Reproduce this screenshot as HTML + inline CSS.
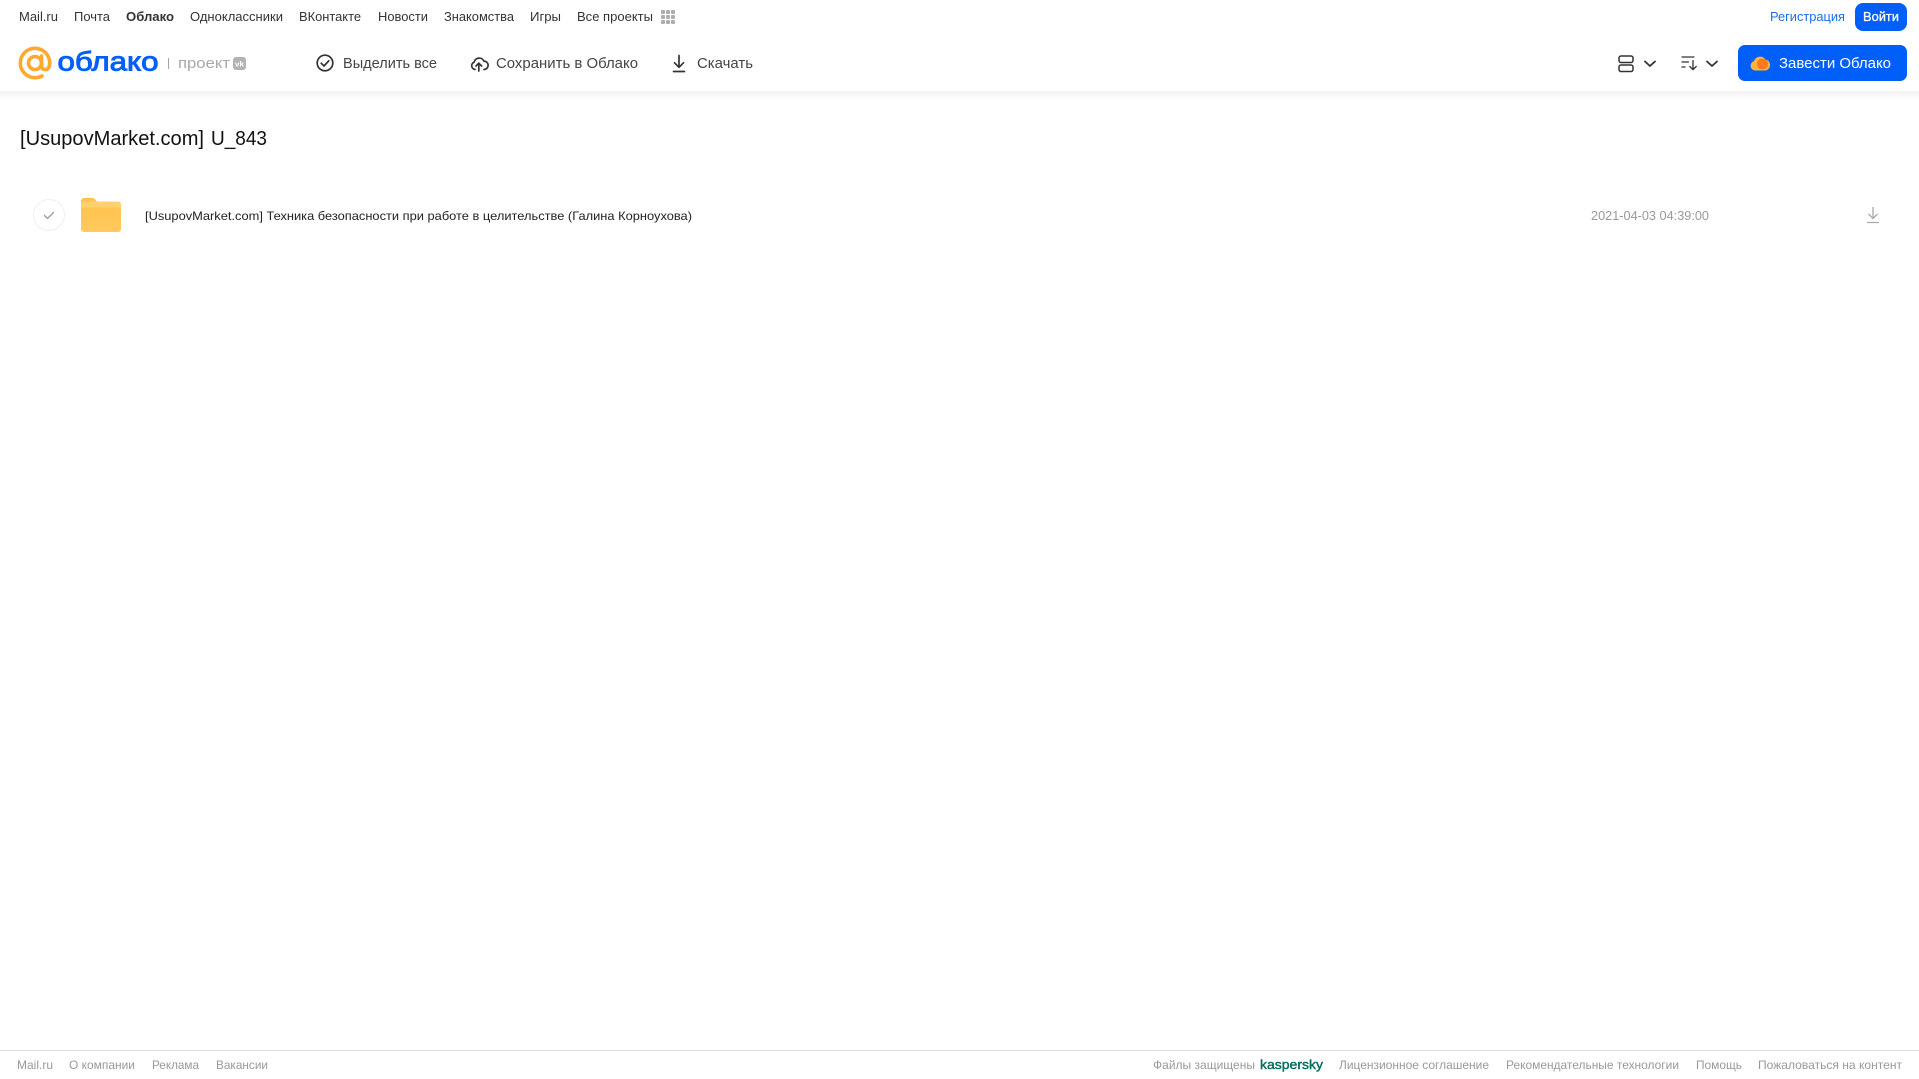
<!DOCTYPE html>
<html lang="ru"><head><meta charset="utf-8"><title>Облако</title>
<style>
html,body{margin:0;padding:0;background:#fff;width:1919px;height:1079px;overflow:hidden}
svg{display:block}
text{font-family:"Liberation Sans",Arial,sans-serif}
.n{font-size:12.500px;fill:#333}
.t{font-size:14.500px;fill:#444}
.f{font-size:12px;fill:#999}
</style></head><body>
<svg width="1919" height="1079" viewBox="0 0 1919 1079" xmlns="http://www.w3.org/2000/svg">
<defs>
<linearGradient id="sh" x1="0" y1="0" x2="0" y2="1"><stop offset="0" stop-color="#f3f3f3"/><stop offset="1" stop-color="#fff"/></linearGradient>
<linearGradient id="fo" x1="0" y1="0" x2="0" y2="1"><stop offset="0" stop-color="#ffc24a"/><stop offset="1" stop-color="#ffc95e"/></linearGradient>
</defs>
<rect x="0" y="91" width="1919" height="9" fill="url(#sh)"/>

<!-- top nav -->
<text class="n" x="19" y="21" textLength="39" lengthAdjust="spacingAndGlyphs">Mail.ru</text>
<text class="n" x="74" y="21" textLength="36" lengthAdjust="spacingAndGlyphs">Почта</text>
<text class="n" x="126" y="21" textLength="48" lengthAdjust="spacingAndGlyphs" font-weight="700">Облако</text>
<text class="n" x="190" y="21" textLength="93" lengthAdjust="spacingAndGlyphs">Одноклассники</text>
<text class="n" x="299" y="21" textLength="62" lengthAdjust="spacingAndGlyphs">ВКонтакте</text>
<text class="n" x="378" y="21" textLength="50" lengthAdjust="spacingAndGlyphs">Новости</text>
<text class="n" x="444" y="21" textLength="70" lengthAdjust="spacingAndGlyphs">Знакомства</text>
<text class="n" x="530" y="21" textLength="31" lengthAdjust="spacingAndGlyphs">Игры</text>
<text class="n" x="577" y="21" textLength="76" lengthAdjust="spacingAndGlyphs">Все проекты</text>
<g fill="#adadad">
<rect x="661" y="10" width="4" height="4" rx="1"/><rect x="666" y="10" width="4" height="4" rx="1"/><rect x="671" y="10" width="4" height="4" rx="1"/>
<rect x="661" y="15" width="4" height="4" rx="1"/><rect x="666" y="15" width="4" height="4" rx="1"/><rect x="671" y="15" width="4" height="4" rx="1"/>
<rect x="661" y="20" width="4" height="4" rx="1"/><rect x="666" y="20" width="4" height="4" rx="1"/><rect x="671" y="20" width="4" height="4" rx="1"/>
</g>
<text x="1770" y="21" font-size="12.500" fill="#1a6fe8" textLength="75" lengthAdjust="spacingAndGlyphs">Регистрация</text>
<rect x="1855" y="3" width="52" height="28" rx="8" fill="#005ff9"/>
<text x="1863" y="21" font-size="13" fill="#fff" stroke="#fff" stroke-width=".3" textLength="36" lengthAdjust="spacingAndGlyphs">Войти</text>

<!-- logo -->
<g fill="none" stroke="#ffa930" stroke-width="3.600" stroke-linecap="round">
<circle cx="35" cy="63" r="6.500"/>
<path d="M41.500 56v9.500c0 2.600 1.600 4.100 3.800 4.100 2.500 0 4.400-2.400 4.400-6.600 0-8.100-6.600-14.700-14.700-14.700S20.300 54.900 20.300 63 26.900 77.700 35 77.700c2.700 0 5-.6 7-1.700"/>
</g>
<text x="57.500" y="70.500" font-size="27" fill="#005ff9" stroke="#005ff9" stroke-width=".9" textLength="101" lengthAdjust="spacingAndGlyphs">облако</text>
<rect x="168" y="58" width="1" height="11" fill="#a5a5a5"/>
<text x="178" y="68" font-size="14.500" fill="#a8a8a8" textLength="52" lengthAdjust="spacingAndGlyphs">проект</text>
<rect x="233" y="57" width="13" height="13" rx="3" fill="#b3b3b3"/>
<text x="235" y="66.500" font-size="7.500" font-weight="700" fill="#fff" textLength="9" lengthAdjust="spacingAndGlyphs">vk</text>

<!-- toolbar -->
<g fill="none" stroke="#333" stroke-width="1.700" stroke-linecap="round" stroke-linejoin="round">
<circle cx="325" cy="63" r="7.800"/>
<path d="M321.200 63.200l2.800 2.800 4.800-5.200"/>
<path d="M475 69.500a3.800 3.800 0 0 1-.9-7.300 5.200 5.200 0 0 1 9.800-1.100 4.200 4.200 0 0 1 .1 8.400"/>
<path d="M478.800 71v-7.500M476 66l2.800-2.800 2.800 2.800"/>
<path d="M679 55.500V67M674.500 62.800L679 67.300l4.500-4.500M673.500 71.500h11"/>
</g>
<text class="t" x="343" y="68" textLength="94" lengthAdjust="spacingAndGlyphs">Выделить все</text>
<text class="t" x="496" y="68" textLength="142" lengthAdjust="spacingAndGlyphs">Сохранить в Облако</text>
<text class="t" x="697" y="68" textLength="56" lengthAdjust="spacingAndGlyphs">Скачать</text>

<!-- view controls -->
<g fill="none" stroke="#333" stroke-width="1.500" stroke-linecap="round" stroke-linejoin="round">
<rect x="1619" y="56" width="14" height="6.500" rx="2"/>
<rect x="1619" y="65" width="14" height="6.500" rx="2"/>
<path stroke-width="1.800" d="M1645 61.500l5 4.500 5-4.500"/>
<path stroke-width="1.800" d="M1707 61.500l5 4.500 5-4.500"/>
<path stroke-width="1.300" d="M1682 57h12M1682 62h6.500M1682 67h3M1693 60.500V69.500M1689.800 66.500l3.200 3.200 3.200-3.200"/>
</g>
<rect x="1738" y="45" width="169" height="36" rx="7" fill="#005ff9"/>
<path d="M1755.500 70.500a4.800 4.800 0 0 1-1.500-9.400 6.500 6.500 0 0 1 11.500-1.600 5.600 5.600 0 0 1 0 11z" fill="#ffb53c"/>
<circle cx="1762.500" cy="64" r="5.500" fill="#ff7a1f"/>
<text x="1779" y="68" font-size="14.500" fill="#fff" textLength="112" lengthAdjust="spacingAndGlyphs">Завести Облако</text>

<!-- title -->
<text x="20" y="145" font-size="20.500" fill="#111" textLength="184" lengthAdjust="spacingAndGlyphs">[UsupovMarket.com]</text>
<text x="211" y="145" font-size="20.500" fill="#111" textLength="56" lengthAdjust="spacingAndGlyphs">U_843</text>

<!-- row -->
<circle cx="49" cy="215" r="15.500" fill="#fff" stroke="#efefef"/>
<path d="M44.500 215.500l3 3 6-6" fill="none" stroke="#9a9a9a" stroke-width="1.300" stroke-linecap="round" stroke-linejoin="round"/>
<path d="M81 201a3 3 0 0 1 3-3h8.500a3 3 0 0 1 2.200 1l2.300 2.500h21a3 3 0 0 1 3 3v24.500a3 3 0 0 1-3 3H84a3 3 0 0 1-3-3z" fill="url(#fo)"/>
<path d="M81 207.500v-3a3 3 0 0 1 3-3h34a3 3 0 0 1 3 3v3z" fill="#ffd06e"/>
<text x="145" y="220" font-size="12" fill="#222" textLength="547" lengthAdjust="spacingAndGlyphs">[UsupovMarket.com] Техника безопасности при работе в целительстве (Галина Корноухова)</text>
<text x="1591" y="220" font-size="13" fill="#999" textLength="118" lengthAdjust="spacingAndGlyphs">2021-04-03 04:39:00</text>
<path d="M1873 207v11.500M1868.500 214l4.500 4.500 4.500-4.500M1867 222.500h12" fill="none" stroke="#a9a9a9" stroke-width="1.300"/>

<!-- footer -->
<rect x="0" y="1050" width="1919" height="1" fill="#ddd"/>
<text class="f" x="17" y="1069" textLength="36" lengthAdjust="spacingAndGlyphs">Mail.ru</text>
<text class="f" x="69" y="1069" textLength="66" lengthAdjust="spacingAndGlyphs">О компании</text>
<text class="f" x="152" y="1069" textLength="47" lengthAdjust="spacingAndGlyphs">Реклама</text>
<text class="f" x="216" y="1069" textLength="52" lengthAdjust="spacingAndGlyphs">Вакансии</text>
<text class="f" x="1153" y="1069" textLength="102" lengthAdjust="spacingAndGlyphs">Файлы защищены</text>
<text x="1260" y="1069" font-size="13" fill="#006d5c" stroke="#006d5c" stroke-width=".4" textLength="63" lengthAdjust="spacingAndGlyphs">kaspersky</text>
<text class="f" x="1339" y="1069" textLength="150" lengthAdjust="spacingAndGlyphs">Лицензионное соглашение</text>
<text class="f" x="1506" y="1069" textLength="173" lengthAdjust="spacingAndGlyphs">Рекомендательные технологии</text>
<text class="f" x="1696" y="1069" textLength="46" lengthAdjust="spacingAndGlyphs">Помощь</text>
<text class="f" x="1758" y="1069" textLength="144" lengthAdjust="spacingAndGlyphs">Пожаловаться на контент</text>
</svg>
</body></html>
